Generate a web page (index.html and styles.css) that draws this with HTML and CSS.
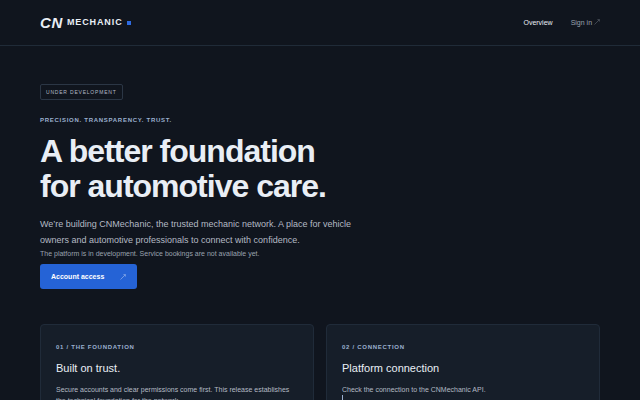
FILE: index.html
```html
<!DOCTYPE html>
<html lang="en">
<head>
    <meta charset="UTF-8">
    <meta name="viewport" content="width=device-width, initial-scale=1.0">
    <title>CN Mechanic</title>
    <link rel="stylesheet" href="styles.css">
</head>
<body>
    <header class="site-header">
        <a class="brand" href="#">
            <span class="brand-mark">CN</span>
            <span class="brand-name">MECHANIC</span>
            <span class="brand-dot"></span>
        </a>
        <nav class="nav">
            <a class="active" href="#">Overview</a>
            <a href="#">Sign in
                <svg class="arrow" viewBox="0 0 6 6" aria-hidden="true"><path d="M0.5 5.5L5.3 0.7M3.4 0.6H5.4V2.6"/></svg>
            </a>
        </nav>
    </header>

    <main>
        <section class="hero">
            <span class="badge">UNDER DEVELOPMENT</span>
            <p class="eyebrow">PRECISION. TRANSPARENCY. TRUST.</p>
            <h1>A better foundation<br>for automotive care.</h1>
            <p class="lead">We’re building CNMechanic, the trusted mechanic network. A place for vehicle owners and automotive professionals to connect with confidence.</p>
            <p class="note">The platform is in development. Service bookings are not available yet.</p>
            <a class="button" href="#">Account access
                <svg class="arrow" viewBox="0 0 6 6" aria-hidden="true"><path d="M0.5 5.5L5.3 0.7M3.4 0.6H5.4V2.6"/></svg>
            </a>
        </section>

        <section class="cards">
            <article class="card">
                <p class="eyebrow">01 / THE FOUNDATION</p>
                <h2>Built on trust.</h2>
                <p>Secure accounts and clear permissions come first. This release establishes the technical foundation for the network.</p>
            </article>
            <article class="card">
                <p class="eyebrow">02 / CONNECTION</p>
                <h2>Platform connection</h2>
                <p>Check the connection to the CNMechanic API.</p>
                <div class="status"></div>
            </article>
        </section>
    </main>
</body>
</html>
```

FILE: styles.css
```css
* {
    box-sizing: border-box;
}
body {
    margin: 0;
    font-family: "Liberation Sans", Arial, sans-serif;
    font-size: 7px;
    line-height: 11px;
    color: #b4bac4;
    background: #10151e;
    overflow-x: hidden;
    scrollbar-width: none;
}
h1, h2, p {
    margin: 0;
}
a {
    color: inherit;
    text-decoration: none;
}
.site-header {
    display: flex;
    align-items: center;
    justify-content: space-between;
    height: 46px;
    padding: 0 40px;
    border-bottom: 1px solid #202b38;
}
.brand {
    display: flex;
    align-items: center;
    gap: 4px;
    color: #e9eef5;
    font-weight: bold;
}
.brand-mark {
    font-size: 15px;
    font-style: italic;
    letter-spacing: 0.04em;
}
.brand-name {
    font-size: 9px;
    letter-spacing: 0.1em;
}
.brand-dot {
    width: 4px;
    height: 4px;
    background: #2f6be0;
}
.nav {
    display: flex;
    gap: 18px;
    color: #9aa2ae;
}
.nav .active {
    color: #e9eef5;
}
.arrow {
    width: 6px;
    height: 6px;
    fill: none;
    stroke: currentColor;
    stroke-width: 0.5;
    opacity: 0.7;
}
main {
    padding: 38px 40px;
}
.hero {
    display: flex;
    flex-direction: column;
    align-items: flex-start;
}
.badge {
    padding: 2px 5px;
    border: 1px solid #2b3645;
    border-radius: 2px;
    font-size: 5px;
    line-height: 10px;
    letter-spacing: 0.16em;
}
.eyebrow {
    font-size: 6px;
    font-weight: bold;
    letter-spacing: 0.12em;
    color: #9bb0d0;
}
.hero .eyebrow {
    margin: 15px 0 8px;
}
h1 {
    font-size: 32px;
    line-height: 35px;
    letter-spacing: -1px;
    color: #e9eef5;
}
.lead {
    max-width: 340px;
    margin-top: 12px;
    font-size: 9px;
    line-height: 16px;
}
.note {
    color: #9aa2ae;
}
.button {
    display: flex;
    align-items: center;
    gap: 16px;
    margin-top: 5px;
    padding: 7px 11px;
    border-radius: 3px;
    background: #2563d6;
    color: #fff;
    font-weight: bold;
}
.cards {
    display: grid;
    grid-template-columns: 1fr 1fr;
    gap: 12px;
    margin-top: 35px;
}
.card {
    padding: 17px 15px;
    border: 1px solid #202b39;
    border-radius: 4px;
    background: #161e29;
}
h2 {
    margin: 7px 0 8px;
    font-size: 11px;
    line-height: 16px;
    font-weight: normal;
    color: #e9eef5;
}
.status {
    height: 20px;
    border-left: 1px solid #9bb0d0;
}
```
